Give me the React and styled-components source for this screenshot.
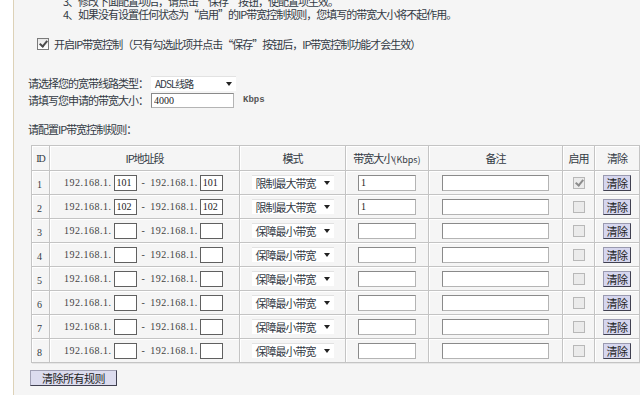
import React from "react";
import styled, { createGlobalStyle } from "styled-components";

const GlobalStyle = createGlobalStyle`
  html, body {
    margin: 0;
    padding: 0;
    background: #f5f5f5;
    overflow: hidden;
  }
  body {
    font-family: "Noto Sans CJK SC", "Liberation Sans", sans-serif;
    font-size: 11px;
    letter-spacing: -1px;
    color: #333a44;
  }
`;

const Page = styled.div`
  display: flex;
  width: 640px;
  height: 395px;
  overflow: hidden;
`;

const SideStrip = styled.div`
  width: 13px;
  flex-shrink: 0;
  background: #ffffff;
  border-right: 1px solid #ddd2b8;
`;

const Main = styled.main`
  flex: 1;
  background: #f5f5f5;
  padding-left: 14px;
`;

const Notes = styled.div`
  margin-top: -5px;
  padding-left: 35px;
  line-height: 13px;
`;

const NoteLine = styled.div`
  white-space: nowrap;
`;

const EnableRow = styled.label`
  display: flex;
  align-items: center;
  gap: 5px;
  margin-top: 16px;
  margin-left: 9px;
  height: 14px;
  white-space: nowrap;
`;

const Box = styled.span`
  display: inline-block;
  width: 10px;
  height: 10px;
  border: 1px solid ${(p) => (p.$dim ? "#b8b8b8" : "#7a7a7a")};
  background: ${(p) => (p.$dim ? "#ebebeb" : "linear-gradient(#e8e8e8, #ffffff)")};
  position: relative;
  flex-shrink: 0;

  &::after {
    content: "";
    display: ${(p) => (p.$checked ? "block" : "none")};
    position: absolute;
    left: 3px;
    top: 0px;
    width: 3px;
    height: 6px;
    border: solid ${(p) => (p.$dim ? "#8c8c8c" : "#4a4a4a")};
    border-width: 0 2px 2px 0;
    transform: rotate(40deg);
  }
`;

const Settings = styled.div`
  margin-top: 24px;
  display: grid;
  grid-template-columns: 123px auto auto;
  row-gap: 1px;
  align-items: center;
  justify-content: start;
`;

const Label = styled.div`
  white-space: nowrap;
`;

const FakeSelect = styled.div`
  display: flex;
  align-items: center;
  justify-content: space-between;
  width: ${(p) => p.$w}px;
  height: 15px;
  padding: 0 4px 0 4px;
  box-sizing: border-box;
  background: #ffffff;
  border-top: 1px solid #e2e2e2;
  font-size: ${(p) => p.$fs || 11}px;
  white-space: nowrap;
`;

const Arrow = styled.span`
  width: 0;
  height: 0;
  border-left: 3px solid transparent;
  border-right: 3px solid transparent;
  border-top: 4px solid #222;
`;

const TextBox = styled.input`
  box-sizing: border-box;
  width: ${(p) => p.$w}px;
  height: ${(p) => p.$h || 15}px;
  padding: 0 2px;
  margin: 0;
  border: 1px solid ${(p) => p.$border || "#8a8a8a"};
  border-bottom-color: ${(p) => p.$border || "#b4b4b4"};
  border-right-color: ${(p) => p.$border || "#b4b4b4"};
  background: #ffffff;
  font-family: "Liberation Serif", serif;
  font-size: 10px;
  letter-spacing: 0;
  color: #222;
  outline: none;
`;

const Unit = styled.span`
  margin-left: 7px;
  font-family: "Liberation Mono", monospace;
  font-size: 9px;
  font-weight: bold;
  letter-spacing: 0;
  color: #555;
`;

const SectionTitle = styled.div`
  margin-top: 13px;
  white-space: nowrap;
`;

const Table = styled.table`
  margin-top: 8px;
  margin-left: 3px;
  width: 603px;
  border-collapse: collapse;
  table-layout: fixed;
  background: #f5f5f5;
  box-shadow: 1px 1px 0 #e6e6e6;
`;

const Th = styled.th`
  width: ${(p) => p.$w}px;
  height: 24px;
  padding: 0;
  border: 1px solid #c4c4c4;
  box-shadow: inset 1px 1px 0 #ffffff;
  font-weight: normal;
  font-size: ${(p) => p.$fs || 11}px;
  font-family: ${(p) => (p.$latin ? '"Liberation Serif", serif' : "inherit")};
  text-align: center;
  white-space: nowrap;
`;

const Small = styled.span`
  font-size: 9px;
  letter-spacing: 0;
`;

const Td = styled.td`
  height: 23px;
  padding: 0;
  border: 1px solid #c4c4c4;
  box-shadow: inset 1px 1px 0 #ffffff;
  text-align: ${(p) => p.$align || "center"};
  white-space: nowrap;
`;

const IdText = styled.span`
  padding-left: 5px;
  font-family: "Liberation Serif", serif;
  font-size: 10px;
  letter-spacing: 0;
`;

const IpRange = styled.div`
  display: flex;
  align-items: center;
  padding-left: 14px;
  font-family: "Liberation Serif", serif;
  font-size: 10px;
  letter-spacing: 0.5px;
  color: #444;
`;

const Prefix = styled.span`
  margin-right: 2px;
`;

const Dash = styled.span`
  margin: 0 5px 0 5px;
`;

const Cell = styled.div`
  display: flex;
  justify-content: center;
  align-items: center;
`;

const ClearBtn = styled.button`
  width: 28px;
  height: 16px;
  padding: 0;
  background: #d6d6ee;
  border: 1px solid #9a9ab0;
  border-right-color: #404050;
  border-bottom-color: #404050;
  font-family: "Noto Sans CJK SC", sans-serif;
  font-size: 11px;
  letter-spacing: -0.5px;
  line-height: 12px;
  color: #222;
`;

const ClearAll = styled.button`
  margin-top: 7px;
  margin-left: 2px;
  width: 87px;
  height: 16px;
  padding: 0;
  background: #dcdcee;
  border: 1px solid #a0a0b4;
  border-right-color: #404050;
  border-bottom-color: #404050;
  font-family: "Noto Sans CJK SC", sans-serif;
  font-size: 11px;
  letter-spacing: -0.5px;
  line-height: 12px;
  color: #222;
`;

const rules = [
  { id: 1, a: "101", b: "101", mode: "限制最大带宽", bw: "1", on: true },
  { id: 2, a: "102", b: "102", mode: "限制最大带宽", bw: "1", on: false },
  { id: 3, a: "", b: "", mode: "保障最小带宽", bw: "", on: false },
  { id: 4, a: "", b: "", mode: "保障最小带宽", bw: "", on: false },
  { id: 5, a: "", b: "", mode: "保障最小带宽", bw: "", on: false },
  { id: 6, a: "", b: "", mode: "保障最小带宽", bw: "", on: false },
  { id: 7, a: "", b: "", mode: "保障最小带宽", bw: "", on: false },
  { id: 8, a: "", b: "", mode: "保障最小带宽", bw: "", on: false },
];

export default function App() {
  return (
    <>
      <GlobalStyle />
      <Page>
        <SideStrip />
        <Main>
          <Notes>
            <NoteLine>3、修改下面配置项后，请点击“保存”按钮，使配置项生效。</NoteLine>
            <NoteLine>4、如果没有设置任何状态为“启用”的IP带宽控制规则，您填写的带宽大小将不起作用。</NoteLine>
          </Notes>

          <EnableRow>
            <Box $checked />
            开启IP带宽控制（只有勾选此项并点击“保存”按钮后，IP带宽控制功能才会生效）
          </EnableRow>

          <Settings>
            <Label>请选择您的宽带线路类型：</Label>
            <FakeSelect $w={85} $fs={10}>
              ADSL线路
              <Arrow />
            </FakeSelect>
            <span />
            <Label>请填写您申请的带宽大小：</Label>
            <TextBox $w={83} readOnly value="4000" />
            <Unit>Kbps</Unit>
          </Settings>

          <SectionTitle>请配置IP带宽控制规则：</SectionTitle>

          <Table>
            <thead>
              <tr>
                <Th $w={17} $latin $fs={10}>ID</Th>
                <Th $w={189}>IP地址段</Th>
                <Th $w={105}>模式</Th>
                <Th $w={82}>带宽大小<Small>(Kbps)</Small></Th>
                <Th $w={133}>备注</Th>
                <Th $w={31}>启用</Th>
                <Th $w={44}>清除</Th>
              </tr>
            </thead>
            <tbody>
              {rules.map((r) => (
                <tr key={r.id}>
                  <Td $align="left">
                    <IdText>{r.id}</IdText>
                  </Td>
                  <Td $align="left">
                    <IpRange>
                      <Prefix>192.168.1.</Prefix>
                      <TextBox $w={23} $h={16} $border="#606060" readOnly value={r.a} />
                      <Dash>-</Dash>
                      <Prefix>192.168.1.</Prefix>
                      <TextBox $w={23} $h={16} $border="#606060" readOnly value={r.b} />
                    </IpRange>
                  </Td>
                  <Td>
                    <Cell>
                      <FakeSelect $w={82}>
                        {r.mode}
                        <Arrow />
                      </FakeSelect>
                    </Cell>
                  </Td>
                  <Td>
                    <Cell>
                      <TextBox $w={58} $h={16} readOnly value={r.bw} />
                    </Cell>
                  </Td>
                  <Td>
                    <Cell>
                      <TextBox $w={107} $h={16} readOnly value="" />
                    </Cell>
                  </Td>
                  <Td>
                    <Cell>
                      <Box $dim $checked={r.on} />
                    </Cell>
                  </Td>
                  <Td>
                    <Cell>
                      <ClearBtn>清除</ClearBtn>
                    </Cell>
                  </Td>
                </tr>
              ))}
            </tbody>
          </Table>

          <ClearAll>清除所有规则</ClearAll>
        </Main>
      </Page>
    </>
  );
}
